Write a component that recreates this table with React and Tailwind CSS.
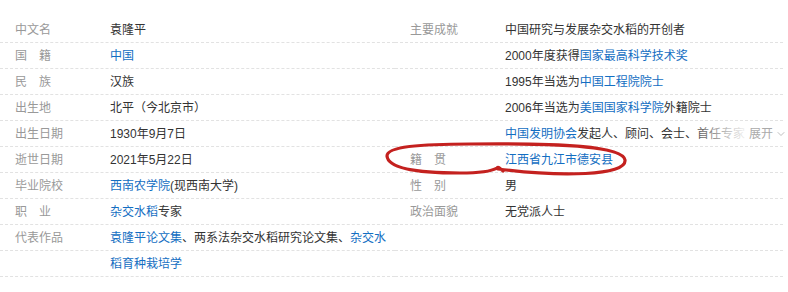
import React from 'react';
import { ChevronDown } from 'lucide-react';

const A = ({ children }) => <span className="text-[#136ec2]">{children}</span>;

const leftRows = [
  { label: '中文名', value: '袁隆平' },
  { label: '国　籍', value: <A>中国</A> },
  { label: '民　族', value: '汉族' },
  { label: '出生地', value: '北平（今北京市）' },
  { label: '出生日期', value: '1930年9月7日' },
  { label: '逝世日期', value: '2021年5月22日' },
  { label: '毕业院校', value: <><A>西南农学院</A>(现西南大学)</> },
  { label: '职　业', value: <><A>杂交水稻</A>专家</> },
  { label: '代表作品', value: <><A>袁隆平论文集</A>、两系法杂交水稻研究论文集、<A>杂交水</A></> },
  { label: '', value: <A>稻育种栽培学</A> },
];

const rightRows = [
  { label: '主要成就', value: '中国研究与发展杂交水稻的开创者' },
  { label: '', value: <>2000年度获得<A>国家最高科学技术奖</A></> },
  { label: '', value: <>1995年当选为<A>中国工程院院士</A></> },
  { label: '', value: <>2006年当选为<A>美国国家科学院</A>外籍院士</> },
  { label: '', value: 'more' },
  { label: '籍　贯', value: <><A>江西省九江市</A><A>德安县</A></> },
  { label: '性　别', value: '男' },
  { label: '政治面貌', value: '无党派人士' },
  { label: '', value: '' },
  { label: '', value: '' },
];

const Row = ({ label, value }) => (
  <div className="h-[26px] flex items-center border-b border-dashed border-[#e2e2e2]">
    <div className="w-[110px] pl-[15px] shrink-0 text-[#999]">{label}</div>
    {value === 'more' ? (
      <div className="relative flex-1 h-full flex items-center whitespace-nowrap text-[#333]">
        <span><A>中国发明协会</A>发起人、顾问、会士、首任专家</span>
        <div className="absolute left-[184px] top-0 h-[25px] w-[62px] bg-gradient-to-r from-white/0 via-white/60 to-white" />
        <div className="absolute left-[244px] top-0 h-[25px] flex items-center gap-[2px] bg-white text-[#aaa]">
          <span>展开</span>
          <ChevronDown className="w-[12px] h-[12px]" strokeWidth={1.5} />
        </div>
      </div>
    ) : (
      <div className="flex-1 whitespace-nowrap text-[#333]">{value}</div>
    )}
  </div>
);

export default function App() {
  return (
    <div
      className="relative w-[788px] h-[292px] bg-white text-[12px] leading-none"
      style={{ fontFamily: '"Liberation Sans", "Noto Sans CJK SC", sans-serif' }}
    >
      <div className="flex pt-[17px]">
        <div className="w-[395px]">
          {leftRows.map((r, i) => <Row key={i} {...r} />)}
        </div>
        <div className="w-[388px]">
          {rightRows.map((r, i) => <Row key={i} {...r} />)}
        </div>
      </div>
      {/* red hand-drawn mark around 籍贯 */}
      <svg className="absolute inset-0 pointer-events-none" width="788" height="292">
        <path
          d="M 498 169 C 560 177, 627 176, 625 160 C 623 146, 560 143, 470 144 C 420 144, 387 147, 387 156 C 388 167, 410 173, 460 173 C 480 173, 492 171, 497 168 C 499 166, 500 169, 503 171"
          fill="none"
          stroke="#c4211f"
          strokeWidth="3.2"
          strokeLinecap="round"
        />
      </svg>
    </div>
  );
}
